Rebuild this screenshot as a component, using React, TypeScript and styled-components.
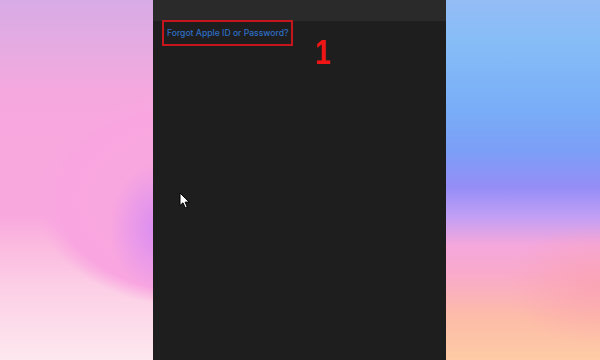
import React from 'react';
import styled, { createGlobalStyle } from 'styled-components';

const GlobalStyle = createGlobalStyle`
  html, body {
    margin: 0;
    padding: 0;
    width: 600px;
    height: 360px;
    overflow: hidden;
    font-family: Inter, "Liberation Sans", sans-serif;
  }
`;

const Screen = styled.div`
  width: 600px;
  height: 360px;
  display: flex;
  position: relative;
`;

const LeftWall = styled.div`
  width: 153px;
  height: 100%;
  background:
    radial-gradient(ellipse 50px 65px at 160px 228px, rgba(214, 138, 244, 0.95), rgba(222, 146, 240, 0) 100%),
    radial-gradient(ellipse 165px 108px at 200px 200px, rgba(249, 168, 222, 1) 0%, rgba(249, 166, 224, 1) 86%, rgba(249, 170, 222, 0) 100%),
    linear-gradient(180deg, #d8abe6 0%, #e6abe1 14%, #f5a8de 26%, #f9a8de 40%, #f9a8de 60%, #fbbadf 68%, #fccfe6 80%, #fde8ee 100%);
`;

const RightWall = styled.div`
  flex: 1;
  height: 100%;
  background:
    radial-gradient(ellipse 90px 60px at 150px 285px, rgba(250, 160, 175, 0.7), rgba(250, 160, 175, 0) 100%),
    linear-gradient(180deg, #94bcf5 0%, #86bdf7 12%, #79aef7 30%, #7b9ef6 42%, #958df7 52%, #c09ff5 60%, #f4a7dc 68%, #f9aacb 76%, #fdbca8 88%, #fdcba5 100%);
`;

const Panel = styled.div`
  width: 293px;
  height: 100%;
  background: #1e1e1f;
  display: flex;
  flex-direction: column;
`;

const TopBar = styled.div`
  height: 21px;
  background: #2a2a2b;
  flex-shrink: 0;
`;

const Body = styled.div`
  display: flex;
  align-items: flex-start;
  padding: 0 0 0 9px;
`;

const Highlight = styled.div`
  border: 2px solid #c4161c;
  padding: 3px 2px 3px 3px;
  height: 16px;
  display: flex;
  align-items: center;
  margin-top: -1px;
`;

const ForgotLink = styled.a`
  color: #2e6ec4;
  font-size: 8.6px;
  font-weight: 500;
  text-decoration: none;
  white-space: nowrap;
`;

const StepNumber = styled.span`
  display: inline-block;
  color: #f01414;
  font-family: "Liberation Sans", Arial, sans-serif;
  font-weight: 700;
  font-size: 35px;
  line-height: 1;
  margin: 13px 0 0 22px;
  transform: scaleX(0.8);
  transform-origin: left top;
`;

const Cursor = styled.svg`
  position: absolute;
  left: 179px;
  top: 192px;
`;

export default function App() {
  return (
    <>
      <GlobalStyle />
      <Screen>
        <LeftWall />
        <Panel>
          <TopBar />
          <Body>
            <Highlight>
              <ForgotLink>Forgot Apple ID or Password?</ForgotLink>
            </Highlight>
            <StepNumber>1</StepNumber>
          </Body>
        </Panel>
        <RightWall />
        <Cursor width="12" height="17" viewBox="0 0 12 17">
          <path d="M1 1 L1 13.5 L4 10.8 L6.2 15.8 L8.2 14.9 L6.1 10.1 L10.2 10.1 Z" fill="#fff" stroke="#000" strokeWidth="1" />
        </Cursor>
      </Screen>
    </>
  );
}
